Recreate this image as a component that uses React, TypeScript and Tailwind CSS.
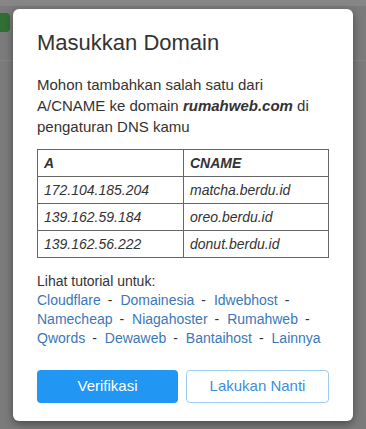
export default function App() {
  const links = [
    'Cloudflare',
    'Domainesia',
    'Idwebhost',
    'Namecheap',
    'Niagahoster',
    'Rumahweb',
    'Qwords',
    'Dewaweb',
    'Bantaihost',
    'Lainnya',
  ]
  const rows = [
    ['172.104.185.204', 'matcha.berdu.id'],
    ['139.162.59.184', 'oreo.berdu.id'],
    ['139.162.56.222', 'donut.berdu.id'],
  ]

  return (
    <div
      className="relative w-[366px] h-[429px] overflow-hidden bg-[#7b7b7b]"
      style={{ fontFamily: '"Liberation Sans", Arial, sans-serif' }}
    >
      {/* page behind the overlay */}
      <div className="absolute inset-x-0 top-0 h-[6px] bg-[#868686]" />
      <div className="absolute inset-x-0 top-[60px] h-px bg-[#858585]" />
      <div className="absolute left-0 top-[13px] w-[10px] h-[19px] rounded-r bg-[#2f6f32]" />

      <div className="absolute left-[13px] top-[9px] w-[340px] h-[412px] rounded-md bg-white shadow-[0_3px_9px_rgba(0,0,0,0.4)] px-6 pt-[20px] text-[#333]">
        <h2 className="text-[22px] leading-[28px] text-[#333]">Masukkan Domain</h2>

        <p className="mt-[17px] text-[15px] leading-[21px]">
          Mohon tambahkan salah satu dari A/CNAME ke domain{' '}
          <b className="italic">rumahweb.com</b> di pengaturan DNS kamu
        </p>

        <table className="mt-[12px] w-full border-collapse text-[14px] italic">
          <thead>
            <tr>
              <th className="border border-[#666] h-[27px] px-[6px] text-left font-bold w-[146px]">A</th>
              <th className="border border-[#666] h-[27px] px-[6px] text-left font-bold">CNAME</th>
            </tr>
          </thead>
          <tbody>
            {rows.map(([a, c]) => (
              <tr key={a}>
                <td className="border border-[#666] h-[27px] px-[6px]">{a}</td>
                <td className="border border-[#666] h-[27px] px-[6px]">{c}</td>
              </tr>
            ))}
          </tbody>
        </table>

        <div className="mt-[14px] text-[14px] leading-[19px]">
          <div>Lihat tutorial untuk:</div>
          <div>
            {links.map((l, i) => (
              <span key={l}>
                <a href="#" className="text-[#3a78b8]">{l}</a>
                {i < links.length - 1 && <span className="pl-[7px] pr-[4px] text-[#333]">-</span>}{' '}
              </span>
            ))}
          </div>
        </div>

        <div className="mt-[22px] flex gap-2">
          <button className="flex-1 h-[33px] rounded bg-[#2196f3] text-white text-[15px]">Verifikasi</button>
          <button className="flex-1 h-[33px] rounded border border-[#9fcdf0] bg-white text-[#3b8fdb] text-[15px]">
            Lakukan Nanti
          </button>
        </div>
      </div>
    </div>
  )
}
